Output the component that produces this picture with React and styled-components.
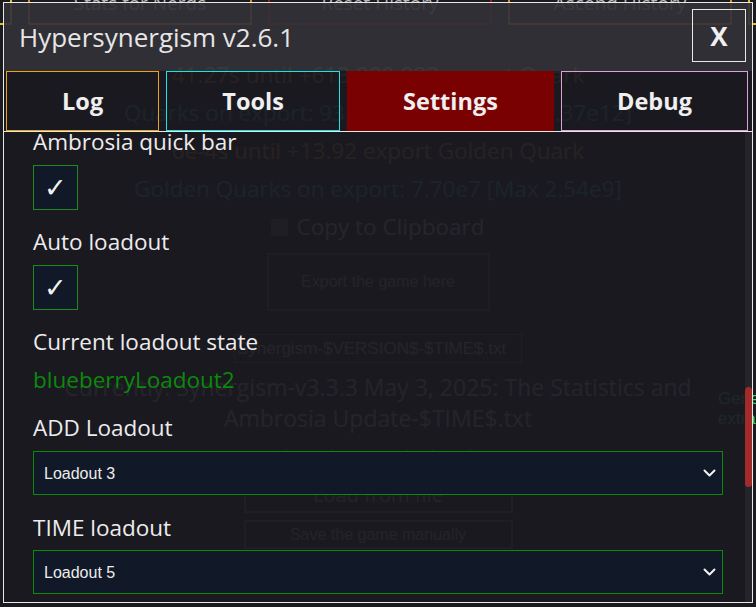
import React from "react";
import styled, { createGlobalStyle } from "styled-components";

const GlobalStyle = createGlobalStyle`
  html, body {
    margin: 0;
    padding: 0;
    background: #1b1a1f;
    overflow: hidden;
  }
  body {
    width: 756px;
    height: 607px;
    position: relative;
    font-family: "Open Sans", "Noto Sans", sans-serif;
  }
`;

const uiFont = `"Open Sans", "Noto Sans", sans-serif`;
const formFont = `"Liberation Sans", Arial, sans-serif`;

/* ---------- game page behind the panel ---------- */

const Page = styled.main`
  display: flex;
  flex-direction: column;
  align-items: center;
  margin-top: -20px;
  width: 756px;
  color: #bbb;
  font-family: ${uiFont};
`;

const TopButtons = styled.div`
  display: flex;
  gap: 16px;
  align-self: flex-start;
  margin-left: -212px;
`;

const TopButton = styled.div`
  flex: 0 0 224px;
  height: 45px;
  box-sizing: border-box;
  border: 2px solid ${(p) => p.$border};
  display: flex;
  align-items: center;
  justify-content: center;
  font-size: 19px;
  color: #bbb;
`;

const StatLine = styled.div`
  font-size: 22.5px;
  line-height: 38px;
  color: ${(p) => p.$color};
  white-space: nowrap;
  margin-top: ${(p) => p.$mt || 0}px;
`;

const CopyRow = styled.label`
  display: flex;
  align-items: center;
  gap: 8px;
  font-size: 22.5px;
  line-height: 38px;
  color: #b0b0b0;
`;

const SmallBox = styled.span`
  width: 17px;
  height: 17px;
  border-radius: 3px;
  background: #555;
`;

const GhostButton = styled.div`
  box-sizing: border-box;
  width: ${(p) => p.$w}px;
  height: ${(p) => p.$h}px;
  margin-top: ${(p) => p.$mt}px;
  border: 2px solid ${(p) => p.$border};
  display: flex;
  align-items: center;
  justify-content: center;
  font-family: ${(p) => (p.$ui ? uiFont : formFont)};
  font-size: ${(p) => p.$fs}px;
  color: #999;
`;

const FileInput = styled.div`
  box-sizing: border-box;
  width: 288px;
  height: 29px;
  margin-top: 23px;
  border: 1px solid #666;
  display: flex;
  align-items: center;
  padding-left: 2px;
  font-family: ${formFont};
  font-size: 17px;
  color: #aaa;
`;

const CurrentRow = styled.div`
  display: grid;
  grid-template-columns: minmax(0, 1fr) 660px minmax(0, 1fr);
  width: 756px;
  align-items: center;
  margin-top: 9px;
`;

const CurrentText = styled.div`
  grid-column: 2;
  text-align: center;
  font-size: 23px;
  line-height: 31px;
  color: #aaa;
  white-space: nowrap;
`;

const SideNote = styled.div`
  grid-column: 3;
  padding-left: 10px;
  margin-top: 12px;
  font-family: ${formFont};
  font-size: 17px;
  line-height: 20px;
  color: #30e070;
  white-space: nowrap;
`;

/* ---------- Hypersynergism panel ---------- */

const Panel = styled.section`
  position: absolute;
  top: 2px;
  left: 3px;
  width: 750px;
  height: 601px;
  box-sizing: border-box;
  border: 1px solid #e8e8e8;
  display: flex;
  flex-direction: column;
  font-family: ${uiFont};
  color: #ececec;
`;

const Header = styled.header`
  height: 68px;
  flex: 0 0 68px;
  display: flex;
  align-items: flex-start;
  justify-content: space-between;
  padding: 0 6px 0 15px;
  background: rgba(51, 50, 56, 0.93);
`;

const Title = styled.h1`
  margin: 0;
  align-self: center;
  font-size: 26px;
  font-weight: 400;
  color: #e6e6e6;
`;

const CloseButton = styled.button`
  margin-top: 6px;
  width: 54px;
  height: 53px;
  box-sizing: border-box;
  background: transparent;
  border: 1px solid #e8e8e8;
  color: #f0f0f0;
  font-family: ${uiFont};
  font-size: 26px;
  font-weight: 700;
  padding: 0;
  cursor: pointer;
`;

const TabBar = styled.nav`
  display: flex;
  gap: 7px;
  padding: 0 4px 0 2px;
  background: rgba(27, 26, 32, 0.93);
  border-bottom: 1px solid #e8e8e8;
`;

const Tab = styled.button`
  flex: 1 1 auto;
  height: 60px;
  box-sizing: border-box;
  border: 1px solid ${(p) => p.$border};
  background: ${(p) => (p.$active ? "rgba(128, 0, 0, 0.95)" : "transparent")};
  color: #efefef;
  font-family: ${uiFont};
  font-size: 23.5px;
  font-weight: 700;
  padding: 0;
`;

const Body = styled.div`
  flex: 1;
  display: flex;
  min-height: 0;
  background: rgba(27, 26, 32, 0.93);
`;

const Scroller = styled.div`
  flex: 1;
  overflow: hidden;
  padding-left: 29px;
  padding-right: 22px;
  display: flex;
  flex-direction: column;
`;

const Track = styled.div`
  flex: 0 0 7px;
  background: rgba(38, 37, 43, 0.95);
  padding-top: 255px;
`;

const Thumb = styled.div`
  height: 100px;
  border-radius: 4px;
  background: #a12b2b;
`;

const Label = styled.div`
  font-size: 22.5px;
  line-height: 28px;
  margin-top: ${(p) => p.$mt}px;
  color: ${(p) => p.$color || "#ececec"};
`;

const Check = styled.div`
  width: 45px;
  height: 45px;
  box-sizing: border-box;
  margin-top: 9px;
  border: 1px solid #1d8a1d;
  background: #111827;
  display: flex;
  align-items: center;
  justify-content: center;
  font-family: "DejaVu Sans", sans-serif;
  font-size: 27px;
  font-weight: 300;
  color: #f2f2f2;
`;

const SelectWrap = styled.div`
  position: relative;
  margin-top: ${(p) => p.$mt}px;
`;

const Select = styled.select`
  appearance: none;
  width: 100%;
  height: 44px;
  box-sizing: border-box;
  border: 1px solid #0a8a0a;
  border-radius: 0;
  background: #111827;
  color: #ececec;
  font-family: ${formFont};
  font-size: 16px;
  padding: 0 10px;
  outline: none;
`;

const Chevron = styled.svg`
  position: absolute;
  right: 7px;
  top: 17px;
  pointer-events: none;
`;

const LoadoutSelect = ({ value, mt }) => (
  <SelectWrap $mt={mt}>
    <Select defaultValue={value}>
      {[1, 2, 3, 4, 5, 6, 7, 8].map((n) => (
        <option key={n} value={n}>
          Loadout {n}
        </option>
      ))}
    </Select>
    <Chevron width="13" height="10" viewBox="0 0 13 10">
      <path
        d="M1.5 2.5 L6.5 7.5 L11.5 2.5"
        fill="none"
        stroke="#f2f2f2"
        strokeWidth="2"
        strokeLinecap="round"
        strokeLinejoin="round"
      />
    </Chevron>
  </SelectWrap>
);

const tabs = [
  { name: "Log", border: "#e8a317" },
  { name: "Tools", border: "#19e3e3" },
  { name: "Settings", border: "#800000", active: true },
  { name: "Debug", border: "#d9a0d9" },
];

export default function App() {
  return (
    <>
      <GlobalStyle />
      <Page>
        <TopButtons>
          <TopButton $border="#e6c21a" />
          <TopButton $border="#e88a12">Stats for Nerds</TopButton>
          <TopButton $border="#a01818">Reset History</TopButton>
          <TopButton $border="#e88a12">Ascend History</TopButton>
          <TopButton $border="#e6c21a" />
        </TopButtons>
        <StatLine $color="#c98a32" $mt={31}>
          41.27s until +613,000,883 export Quark
        </StatLine>
        <StatLine $color="#24a3a3">Quarks on export: 93,789,135,242 [Max 1.37e12]</StatLine>
        <StatLine $color="#c98a32">6e-4s until +13.92 export Golden Quark</StatLine>
        <StatLine $color="#24a3a3">Golden Quarks on export: 7.70e7 [Max 2.54e9]</StatLine>
        <CopyRow>
          <SmallBox />
          Copy to Clipboard
        </CopyRow>
        <GhostButton $w={223} $h={58} $mt={7} $border="#1d6a1d" $fs={16}>
          Export the game here
        </GhostButton>
        <FileInput>Synergism-$VERSION$-$TIME$.txt</FileInput>
        <CurrentRow>
          <CurrentText>
            Currently: Synergism-v3.3.3 May 3, 2025: The Statistics and
            <br />
            Ambrosia Update-$TIME$.txt
          </CurrentText>
          <SideNote>
            Generate
            <br />
            extra
          </SideNote>
        </CurrentRow>
        <StatLine $color="#2aa05a" $mt={4}>
          Load game below!
        </StatLine>
        <GhostButton $w={269} $h={37} $mt={0} $border="#6a6a6a" $fs={20} $ui>
          Load from file
        </GhostButton>
        <GhostButton $w={269} $h={29} $mt={7} $border="#5e5e5e" $fs={16}>
          Save the game manually
        </GhostButton>
        <GhostButton $w={269} $h={29} $mt={7} $border="#8e1c3c" $fs={16}>
          Delete savefile
        </GhostButton>
      </Page>

      <Panel>
        <Header>
          <Title>Hypersynergism v2.6.1</Title>
          <CloseButton>X</CloseButton>
        </Header>
        <TabBar>
          {tabs.map((t) => (
            <Tab key={t.name} $border={t.border} $active={t.active}>
              {t.name}
            </Tab>
          ))}
        </TabBar>
        <Body>
          <Scroller>
            <Label $mt={-4}>Ambrosia quick bar</Label>
            <Check>✓</Check>
            <Label $mt={18}>Auto loadout</Label>
            <Check>✓</Check>
            <Label $mt={18}>Current loadout state</Label>
            <Label $mt={10} $color="#0a8a0a">
              blueberryLoadout2
            </Label>
            <Label $mt={20}>ADD Loadout</Label>
            <LoadoutSelect value={3} mt={9} />
            <Label $mt={19}>TIME loadout</Label>
            <LoadoutSelect value={5} mt={8} />
          </Scroller>
          <Track>
            <Thumb />
          </Track>
        </Body>
      </Panel>
    </>
  );
}
